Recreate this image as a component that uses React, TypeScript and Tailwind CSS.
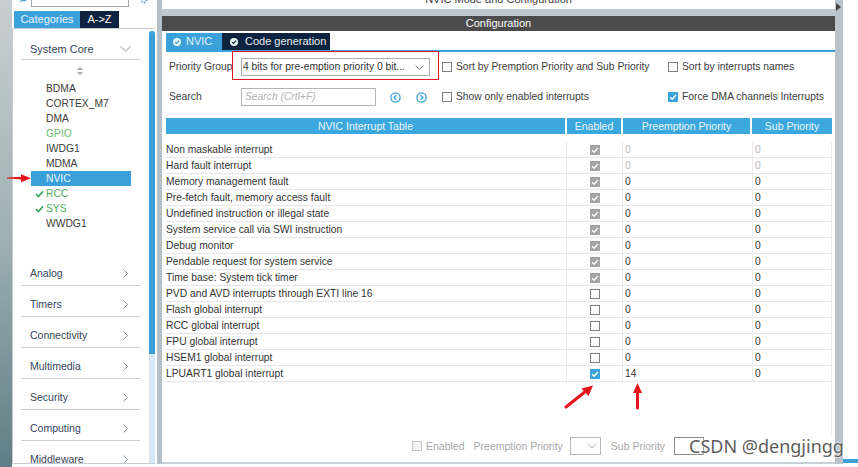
import React from "react";

type En = "locked" | "off" | "on";
type Row = { name: string; en: En; pre: string; sub: string; dim?: boolean };

const ROWS: Row[] = [
  { name: "Non maskable interrupt", en: "locked", pre: "0", sub: "0", dim: true },
  { name: "Hard fault interrupt", en: "locked", pre: "0", sub: "0", dim: true },
  { name: "Memory management fault", en: "locked", pre: "0", sub: "0" },
  { name: "Pre-fetch fault, memory access fault", en: "locked", pre: "0", sub: "0" },
  { name: "Undefined instruction or illegal state", en: "locked", pre: "0", sub: "0" },
  { name: "System service call via SWI instruction", en: "locked", pre: "0", sub: "0" },
  { name: "Debug monitor", en: "locked", pre: "0", sub: "0" },
  { name: "Pendable request for system service", en: "locked", pre: "0", sub: "0" },
  { name: "Time base: System tick timer", en: "locked", pre: "0", sub: "0" },
  { name: "PVD and AVD interrupts through EXTI line 16", en: "off", pre: "0", sub: "0" },
  { name: "Flash global interrupt", en: "off", pre: "0", sub: "0" },
  { name: "RCC global interrupt", en: "off", pre: "0", sub: "0" },
  { name: "FPU global interrupt", en: "off", pre: "0", sub: "0" },
  { name: "HSEM1 global interrupt", en: "off", pre: "0", sub: "0" },
  { name: "LPUART1 global interrupt", en: "on", pre: "14", sub: "0" },
];

const CORE = [
  { n: "BDMA" },
  { n: "CORTEX_M7" },
  { n: "DMA" },
  { n: "GPIO", green: true },
  { n: "IWDG1" },
  { n: "MDMA" },
  { n: "NVIC", sel: true },
  { n: "RCC", green: true, check: true },
  { n: "SYS", green: true, check: true },
  { n: "WWDG1" },
];

const CATEGORIES = ["Analog", "Timers", "Connectivity", "Multimedia", "Security", "Computing", "Middleware"];

function Tick({ color = "#fff" }: { color?: string }) {
  return (
    <svg width="10" height="10" viewBox="0 0 10 10">
      <path d="M2.2 5.2 L4.2 7.2 L7.9 3" fill="none" stroke={color} strokeWidth="1.4" />
    </svg>
  );
}

function Check({ state }: { state: En | "dis" }) {
  if (state === "off") return <span className="block h-[10px] w-[10px] border border-[#7d7d7d] bg-white" />;
  if (state === "dis") return <span className="block h-[10px] w-[10px] border border-[#c4c4c4] bg-[#f4f4f4]" />;
  const bg = state === "on" ? "bg-[#3ba3dc]" : "bg-[#a3a3a3]";
  return (
    <span className={`block h-[10px] w-[10px] ${bg}`}>
      <Tick />
    </span>
  );
}

function GreenTick() {
  return (
    <svg width="9" height="8" viewBox="0 0 9 8">
      <path d="M1 4.2 L3.4 6.5 L8 1.3" fill="none" stroke="#3fa864" strokeWidth="1.8" />
    </svg>
  );
}

function Sidebar() {
  return (
    <aside className="flex h-[464px] w-[145px] flex-col overflow-hidden bg-white">
      {/* search strip, mostly scrolled off */}
      <div className="relative h-[11px] shrink-0">
        <svg className="absolute left-[8px] top-[-4px]" width="8" height="7" viewBox="0 0 8 7">
          <circle cx="4" cy="2" r="2.6" fill="none" stroke="#3ba0da" strokeWidth="1.2" />
          <path d="M2 4 L0.5 6" stroke="#3ba0da" strokeWidth="1.2" />
        </svg>
        <div className="absolute left-[19px] top-[-5px] h-[12px] w-[98px] border border-[#9da7ae] bg-white" />
        <svg className="absolute left-[128px] top-[-4px]" width="8" height="8" viewBox="0 0 8 8">
          <circle cx="4" cy="4" r="2.6" fill="none" stroke="#4aa6dc" strokeWidth="1.6" strokeDasharray="1.5 1" />
        </svg>
      </div>
      <div className="flex h-[17px] shrink-0 pl-[2px] text-[11px] leading-[17px]">
        <div className="w-[66px] bg-[#3ba1da] text-center text-[#eaf5fc]">Categories</div>
        <div className="w-[39px] bg-[#0d2340] text-center text-white">A-&gt;Z</div>
      </div>
      <div className="mr-[2px] flex min-h-0 flex-1 overflow-hidden border-y border-l border-[#c6ced4]">
        <div className="flex flex-1 flex-col overflow-hidden">
          <div className="ml-[8px] mt-[9px] flex h-[22px] w-[119px] shrink-0 items-center justify-between border-b border-[#c9d0d6] pl-[9px] pr-[9px] text-[11px] text-[#34445a]">
            <span>System Core</span>
            <svg width="11" height="6" viewBox="0 0 11 6">
              <path d="M0.5 0.5 L5.5 5 L10.5 0.5" fill="none" stroke="#8a96a2" strokeWidth="1" />
            </svg>
          </div>
          <div className="flex h-[21px] shrink-0 items-center justify-center pr-[3px]">
            <svg width="6" height="8" viewBox="0 0 6 8">
              <path d="M3 0 L6 3 L0 3 Z" fill="#a8a8a8" />
              <path d="M3 8 L6 5 L0 5 Z" fill="#a8a8a8" />
            </svg>
          </div>
          <div className="flex shrink-0 flex-col">
            {CORE.map((it) => (
              <div
                key={it.n}
                className={`ml-[18px] flex h-[15px] w-[100px] items-center ${
                  it.sel ? "bg-[#3aa0da] text-[#eaf5fc]" : it.green ? "text-[#4cae5e]" : "text-[#3c3c3c]"
                }`}
              >
                <span className="flex w-[15px] justify-center pl-[1px]">{it.check && <GreenTick />}</span>
                <span className={it.n === "GPIO" ? "text-[#6cbd74]" : ""}>{it.n}</span>
              </div>
            ))}
          </div>
          <div className="h-[24px] shrink-0" />
          {CATEGORIES.map((c) => (
            <div
              key={c}
              className="ml-[8px] flex h-[31px] w-[119px] shrink-0 items-end justify-between border-b border-[#c9d0d6] pb-[4px] pl-[9px] pr-[12px] text-[10.5px] text-[#34445a]"
            >
              <span>{c}</span>
              <svg className="mb-[3px]" width="5" height="9" viewBox="0 0 5 9">
                <path d="M0.5 0.5 L4.5 4.5 L0.5 8.5" fill="none" stroke="#8a96a2" strokeWidth="1" />
              </svg>
            </div>
          ))}
        </div>
        <div className="mt-[2px] flex w-[6px] flex-col bg-[#d6e8f5]">
          <div className="h-[323px] rounded-t-[3px] bg-[#3ba0da]" />
        </div>
      </div>
    </aside>
  );
}

function CircleArrow({ dir }: { dir: "l" | "r" }) {
  return (
    <svg width="11" height="11" viewBox="0 0 11 11">
      <circle cx="5.5" cy="5.5" r="4.6" fill="none" stroke="#3ba0da" strokeWidth="1.3" />
      <path
        d={dir === "l" ? "M6.3 3.3 L4.1 5.5 L6.3 7.7" : "M4.7 3.3 L6.9 5.5 L4.7 7.7"}
        fill="none"
        stroke="#3ba0da"
        strokeWidth="1.4"
      />
    </svg>
  );
}

function TabIcon({ color }: { color: string }) {
  return (
    <svg width="8" height="8" viewBox="0 0 8 8">
      <circle cx="4" cy="4" r="4" fill="#e9f6ee" />
      <path d="M2 4.1 L3.5 5.5 L6 2.7" fill="none" stroke={color} strokeWidth="1.2" />
    </svg>
  );
}

function Config() {
  return (
    <main className="flex h-[464px] w-[673px] flex-col border-b-2 border-[#c9d1d6]">
      <div className="h-[9px] shrink-0 overflow-hidden bg-white text-center text-[11px] leading-[13px] text-[#444]">
        <div className="-mt-[7px]">NVIC Mode and Configuration</div>
      </div>
      <div className="h-[7px] shrink-0 bg-[#bfc8cf]" />
      <div className="h-[15px] shrink-0 bg-[#4b4b4b] text-center text-[11px] leading-[15px] text-white">Configuration</div>
      <div className="flex flex-1 flex-col bg-white pl-[4px]">
        <div className="mt-[2px] flex h-[17px] text-[11px] leading-[17px]">
          <div className="flex w-[56px] items-center gap-[5px] bg-[#3ba1da] pl-[7px] text-[#e6f4fb]">
            <TabIcon color="#3ba1da" />
            <span>NVIC</span>
          </div>
          <div className="flex w-[108px] items-center gap-[7px] bg-[#0d2340] pl-[8px] text-[#e9eef3]">
            <TabIcon color="#0d2340" />
            <span>Code generation</span>
          </div>
        </div>
        <div className="h-[2px] bg-[#3ba3dc]" />
        <div className="flex h-[30px] items-center pl-[3px] text-[#3d3d3d]">
          <span className="w-[72px]">Priority Group</span>
          <div className="flex h-[18px] w-[189px] items-center justify-between border border-[#adadad] pl-[1px] pr-[5px] text-[#333]">
            <span>4 bits for pre-emption priority 0 bit...</span>
            <svg width="9" height="5" viewBox="0 0 9 5">
              <path d="M0.5 0.5 L4.5 4.5 L8.5 0.5" fill="none" stroke="#777" strokeWidth="1" />
            </svg>
          </div>
          <div className="ml-[12px] flex w-[226px] items-center gap-[4px]">
            <Check state="off" />
            <span>Sort by Premption Priority and Sub Priority</span>
          </div>
          <div className="flex items-center gap-[4px]">
            <Check state="off" />
            <span>Sort by interrupts names</span>
          </div>
        </div>
        <div className="flex h-[30px] items-center pl-[3px] text-[#3d3d3d]">
          <span className="w-[72px]">Search</span>
          <div className="flex h-[18px] w-[135px] items-center border border-[#b4b4b4] pl-[3px] italic text-[#b2b2b2]">
            Search (Crtl+F)
          </div>
          <span className="ml-[14px] flex">
            <CircleArrow dir="l" />
          </span>
          <span className="ml-[15px] flex">
            <CircleArrow dir="r" />
          </span>
          <div className="ml-[15px] flex w-[226px] items-center gap-[4px]">
            <Check state="off" />
            <span>Show only enabled interrupts</span>
          </div>
          <div className="flex items-center gap-[4px]">
            <Check state="on" />
            <span>Force DMA channels Interrupts</span>
          </div>
        </div>
        <div className="h-[6px]" />
        <div className="flex h-[16px] w-[666px] gap-[2px] text-[10.5px] leading-[16px] text-[#eaf6fc]">
          <div className="w-[399px] bg-[#3aa8df] text-center">NVIC Interrupt Table</div>
          <div className="w-[54px] bg-[#3aa8df] text-center">Enabled</div>
          <div className="w-[127px] bg-[#3aa8df] text-center">Preemption Priority</div>
          <div className="w-[80px] bg-[#3aa8df] text-center">Sub Priority</div>
        </div>
        <div className="h-[8px]" />
        <div className="flex w-[666px] flex-col">
          {ROWS.map((r) => (
            <div key={r.name} className="flex h-[16px] items-center border-b border-[#e6e6e6] text-[#333]">
              <div className="w-[400px]">{r.name}</div>
              <div className="flex h-full w-[56px] items-center justify-center border-l border-[#ebebeb]">
                <Check state={r.en} />
              </div>
              <div
                className={`flex h-full w-[130px] items-center border-l border-[#ebebeb] pl-[2px] ${
                  r.dim ? "text-[#b9b9b9]" : "text-[#3a2e2e]"
                }`}
              >
                {r.pre}
              </div>
              <div
                className={`flex h-full w-[80px] items-center border-x border-[#ebebeb] pl-[2px] ${
                  r.dim ? "text-[#b9b9b9]" : "text-[#3a2e2e]"
                }`}
              >
                {r.sub}
              </div>
            </div>
          ))}
          <div className="flex h-[55px] justify-end">
            <div className="w-[1px] bg-[#ebebeb]" />
          </div>
        </div>
        <div className="flex h-[18px] items-center text-[10.5px] text-[#a8a8a8]">
          <div className="ml-[246px] flex items-center gap-[4px]">
            <Check state="dis" />
            <span>Enabled</span>
          </div>
          <span className="ml-[9px]">Preemption Priority</span>
          <div className="ml-[7px] flex h-[18px] w-[31px] items-center justify-end border border-[#b8b8b8] pr-[4px]">
            <svg width="8" height="5" viewBox="0 0 8 5">
              <path d="M0.5 0.5 L4 4 L7.5 0.5" fill="none" stroke="#aaa" strokeWidth="1" />
            </svg>
          </div>
          <span className="ml-[10px]">Sub Priority</span>
          <div className="ml-[9px] h-[18px] w-[30px] border border-[#8a8a8a]" />
        </div>
        <div className="flex-1" />
      </div>
    </main>
  );
}

export default function App() {
  return (
    <div className="relative flex h-[467px] w-[858px] items-start overflow-hidden bg-white font-['Liberation_Sans',Arial,sans-serif] text-[10.3px] leading-[16px]">
      <div className="h-[467px] w-[12px] bg-gradient-to-b from-[#c9cfd1] via-[#9fb1b5] to-[#5f7e86]" />
      <Sidebar />
      <div className="h-[464px] w-[5px] bg-[#b6c0c8]" />
      <Config />
      <div className="relative h-[464px] w-[8px] bg-[#b9c3cb]">
        <svg className="absolute left-[1px] top-[3px]" width="5" height="8" viewBox="0 0 5 8">
          <path d="M0 0 L5 4 L0 8 Z" fill="#444" />
        </svg>
      </div>
      <div className="flex h-[467px] flex-1 flex-col justify-end pb-[4px]">
        <div className="h-[4px] bg-[#3ba0da]" />
      </div>

      {/* annotations */}
      <div className="pointer-events-none absolute left-[232px] top-[51px] h-[29px] w-[207px] border-[1.5px] border-[#e8141c]" />
      <svg className="pointer-events-none absolute left-0 top-0" width="858" height="467" viewBox="0 0 858 467">
        <path d="M7 177.6 L22 176.8 L22 179.6 L7 178.6 Z" fill="#e8141c" />
        <path d="M21 174.2 L31 178.2 L21 182.2 Z" fill="#e8141c" />
        <path d="M566 407 L586 391" stroke="#e8141c" strokeWidth="3" strokeLinecap="round" />
        <path d="M593 385.5 L581.5 388.5 L588.5 396 Z" fill="#e8141c" />
        <path d="M637.5 408 L637.5 392" stroke="#e8141c" strokeWidth="3" strokeLinecap="round" />
        <path d="M637.5 383 L633 393 L642 393 Z" fill="#e8141c" />
      </svg>
      <div className="pointer-events-none absolute left-[689px] top-[434px] font-['Noto_Sans',sans-serif] text-[18px] leading-[24px] text-[#5d5d5d] [text-shadow:0_0_2px_#fff,0_0_2px_#fff]">
        CSDN @dengjingg
      </div>
    </div>
  );
}
